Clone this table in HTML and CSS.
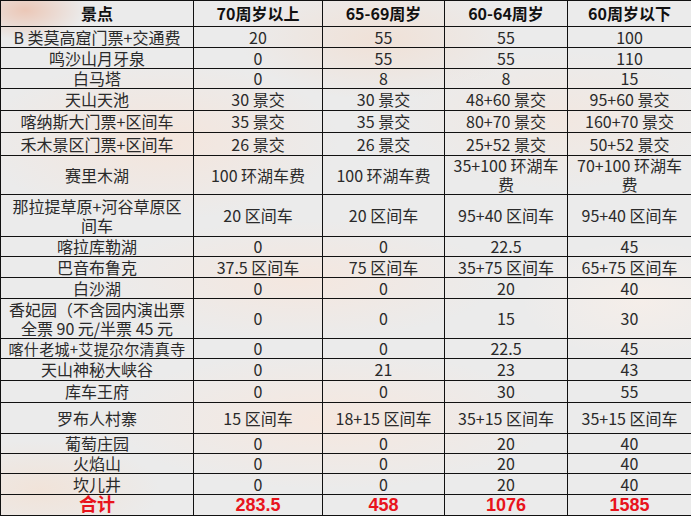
FILE: index.html
```html
<!DOCTYPE html>
<html lang="zh">
<head>
<meta charset="utf-8">
<title>景点票价</title>
<link rel="stylesheet" href="styles.css">
</head>
<body>
<table class="fare">
  <colgroup>
    <col class="c1"><col class="c2"><col class="c3"><col class="c4"><col class="c5">
  </colgroup>
  <thead>
    <tr class="h-head"><th>景点</th><th>70周岁以上</th><th>65-69周岁</th><th>60-64周岁</th><th>60周岁以下</th></tr>
  </thead>
  <tbody>
    <tr class="h21"><td>B 类莫高窟门票+交通费</td><td>20</td><td>55</td><td>55</td><td>100</td></tr>
    <tr class="h21"><td>鸣沙山月牙泉</td><td>0</td><td>55</td><td>55</td><td>110</td></tr>
    <tr class="h20"><td>白马塔</td><td>0</td><td>8</td><td>8</td><td>15</td></tr>
    <tr class="h22"><td>天山天池</td><td>30 景交</td><td>30 景交</td><td>48+60 景交</td><td>95+60 景交</td></tr>
    <tr class="h22"><td>喀纳斯大门票+区间车</td><td>35 景交</td><td>35 景交</td><td>80+70 景交</td><td>160+70 景交</td></tr>
    <tr class="h23"><td>禾木景区门票+区间车</td><td>26 景交</td><td>26 景交</td><td>25+52 景交</td><td>50+52 景交</td></tr>
    <tr class="h39"><td>赛里木湖</td><td>100 环湖车费</td><td>100 环湖车费</td><td>35+100 环湖车<br>费</td><td>70+100 环湖车<br>费</td></tr>
    <tr class="h42"><td>那拉提草原+河谷草原区<br>间车</td><td>20 区间车</td><td>20 区间车</td><td>95+40 区间车</td><td>95+40 区间车</td></tr>
    <tr class="h20"><td>喀拉库勒湖</td><td>0</td><td>0</td><td>22.5</td><td>45</td></tr>
    <tr class="h21"><td>巴音布鲁克</td><td>37.5 区间车</td><td>75 区间车</td><td>35+75 区间车</td><td>65+75 区间车</td></tr>
    <tr class="h21"><td>白沙湖</td><td>0</td><td>0</td><td>20</td><td>40</td></tr>
    <tr class="h40"><td>香妃园（不含园内演出票<br>全票 90 元/半票 45 元</td><td>0</td><td>0</td><td>15</td><td>30</td></tr>
    <tr class="h20"><td class="spaced">喀什老城+艾提尕尔清真寺</td><td>0</td><td>0</td><td>22.5</td><td>45</td></tr>
    <tr class="h22"><td>天山神秘大峡谷</td><td>0</td><td>21</td><td>23</td><td>43</td></tr>
    <tr class="h22"><td>库车王府</td><td>0</td><td>0</td><td>30</td><td>55</td></tr>
    <tr class="h31"><td>罗布人村寨</td><td>15 区间车</td><td>18+15 区间车</td><td>35+15 区间车</td><td>35+15 区间车</td></tr>
    <tr class="h20"><td>葡萄庄园</td><td>0</td><td>0</td><td>20</td><td>40</td></tr>
    <tr class="h20"><td>火焰山</td><td>0</td><td>0</td><td>20</td><td>40</td></tr>
    <tr class="h21"><td>坎儿井</td><td>0</td><td>0</td><td>20</td><td>40</td></tr>
    <tr class="h21 total"><td>合计</td><td>283.5</td><td>458</td><td>1076</td><td>1585</td></tr>
  </tbody>
</table>
</body>
</html>
```
FILE: styles.css
```css
html, body {
  margin: 0;
  padding: 0;
}
body {
  width: 691px;
  min-height: 516px;
  background-color: #ebebeb;
  background-image:
    radial-gradient(ellipse 60px 30px at 25px 10px, rgba(235,170,140,0.55), rgba(235,170,140,0) 100%),
    radial-gradient(ellipse 140px 60px at 380px 40px, rgba(245,215,195,0.5), rgba(245,215,195,0) 100%),
    radial-gradient(ellipse 180px 80px at 160px 140px, rgba(250,225,210,0.6), rgba(250,225,210,0) 100%),
    radial-gradient(ellipse 160px 70px at 560px 120px, rgba(248,228,215,0.5), rgba(248,228,215,0) 100%),
    radial-gradient(ellipse 200px 60px at 300px 280px, rgba(250,228,215,0.6), rgba(250,228,215,0) 100%),
    radial-gradient(ellipse 220px 70px at 330px 420px, rgba(250,230,218,0.7), rgba(250,230,218,0) 100%),
    radial-gradient(ellipse 120px 50px at 40px 490px, rgba(245,222,205,0.6), rgba(245,222,205,0) 100%),
    radial-gradient(ellipse 120px 60px at 640px 300px, rgba(252,240,232,0.6), rgba(252,240,232,0) 100%);
  font-family: "Noto Sans CJK SC", "Liberation Sans", sans-serif;
}
.fare {
  width: 691px;
  table-layout: fixed;
  border-collapse: collapse;
  font-size: 16px;
  color: #2a2a2a;
}
.c1 { width: 193px; }
.c2 { width: 129px; }
.c3 { width: 122px; }
.c4 { width: 123px; }
.c5 { width: 124px; }
.fare th, .fare td {
  border: 1px solid #111;
  padding: 0 1px;
  text-align: center;
  vertical-align: middle;
  line-height: 19px;
  white-space: nowrap;
}
.fare th {
  font-weight: 700;
  color: #111;
  font-size: 16px;
}
.h-head { height: 26px; }
.h20 { height: 20px; }
.h21 { height: 21px; }
.h22 { height: 22px; }
.h23 { height: 23px; }
.h31 { height: 31px; }
.h39 { height: 39px; }
.h40 { height: 40px; }
.h42 { height: 42px; }
.spaced {
  font-size: 15px;
  letter-spacing: 0.3px;
}
.total td {
  color: #e8141c;
  font-weight: 700;
  font-family: "Liberation Sans", "Noto Sans CJK SC", sans-serif;
  font-size: 18px;
}
```
